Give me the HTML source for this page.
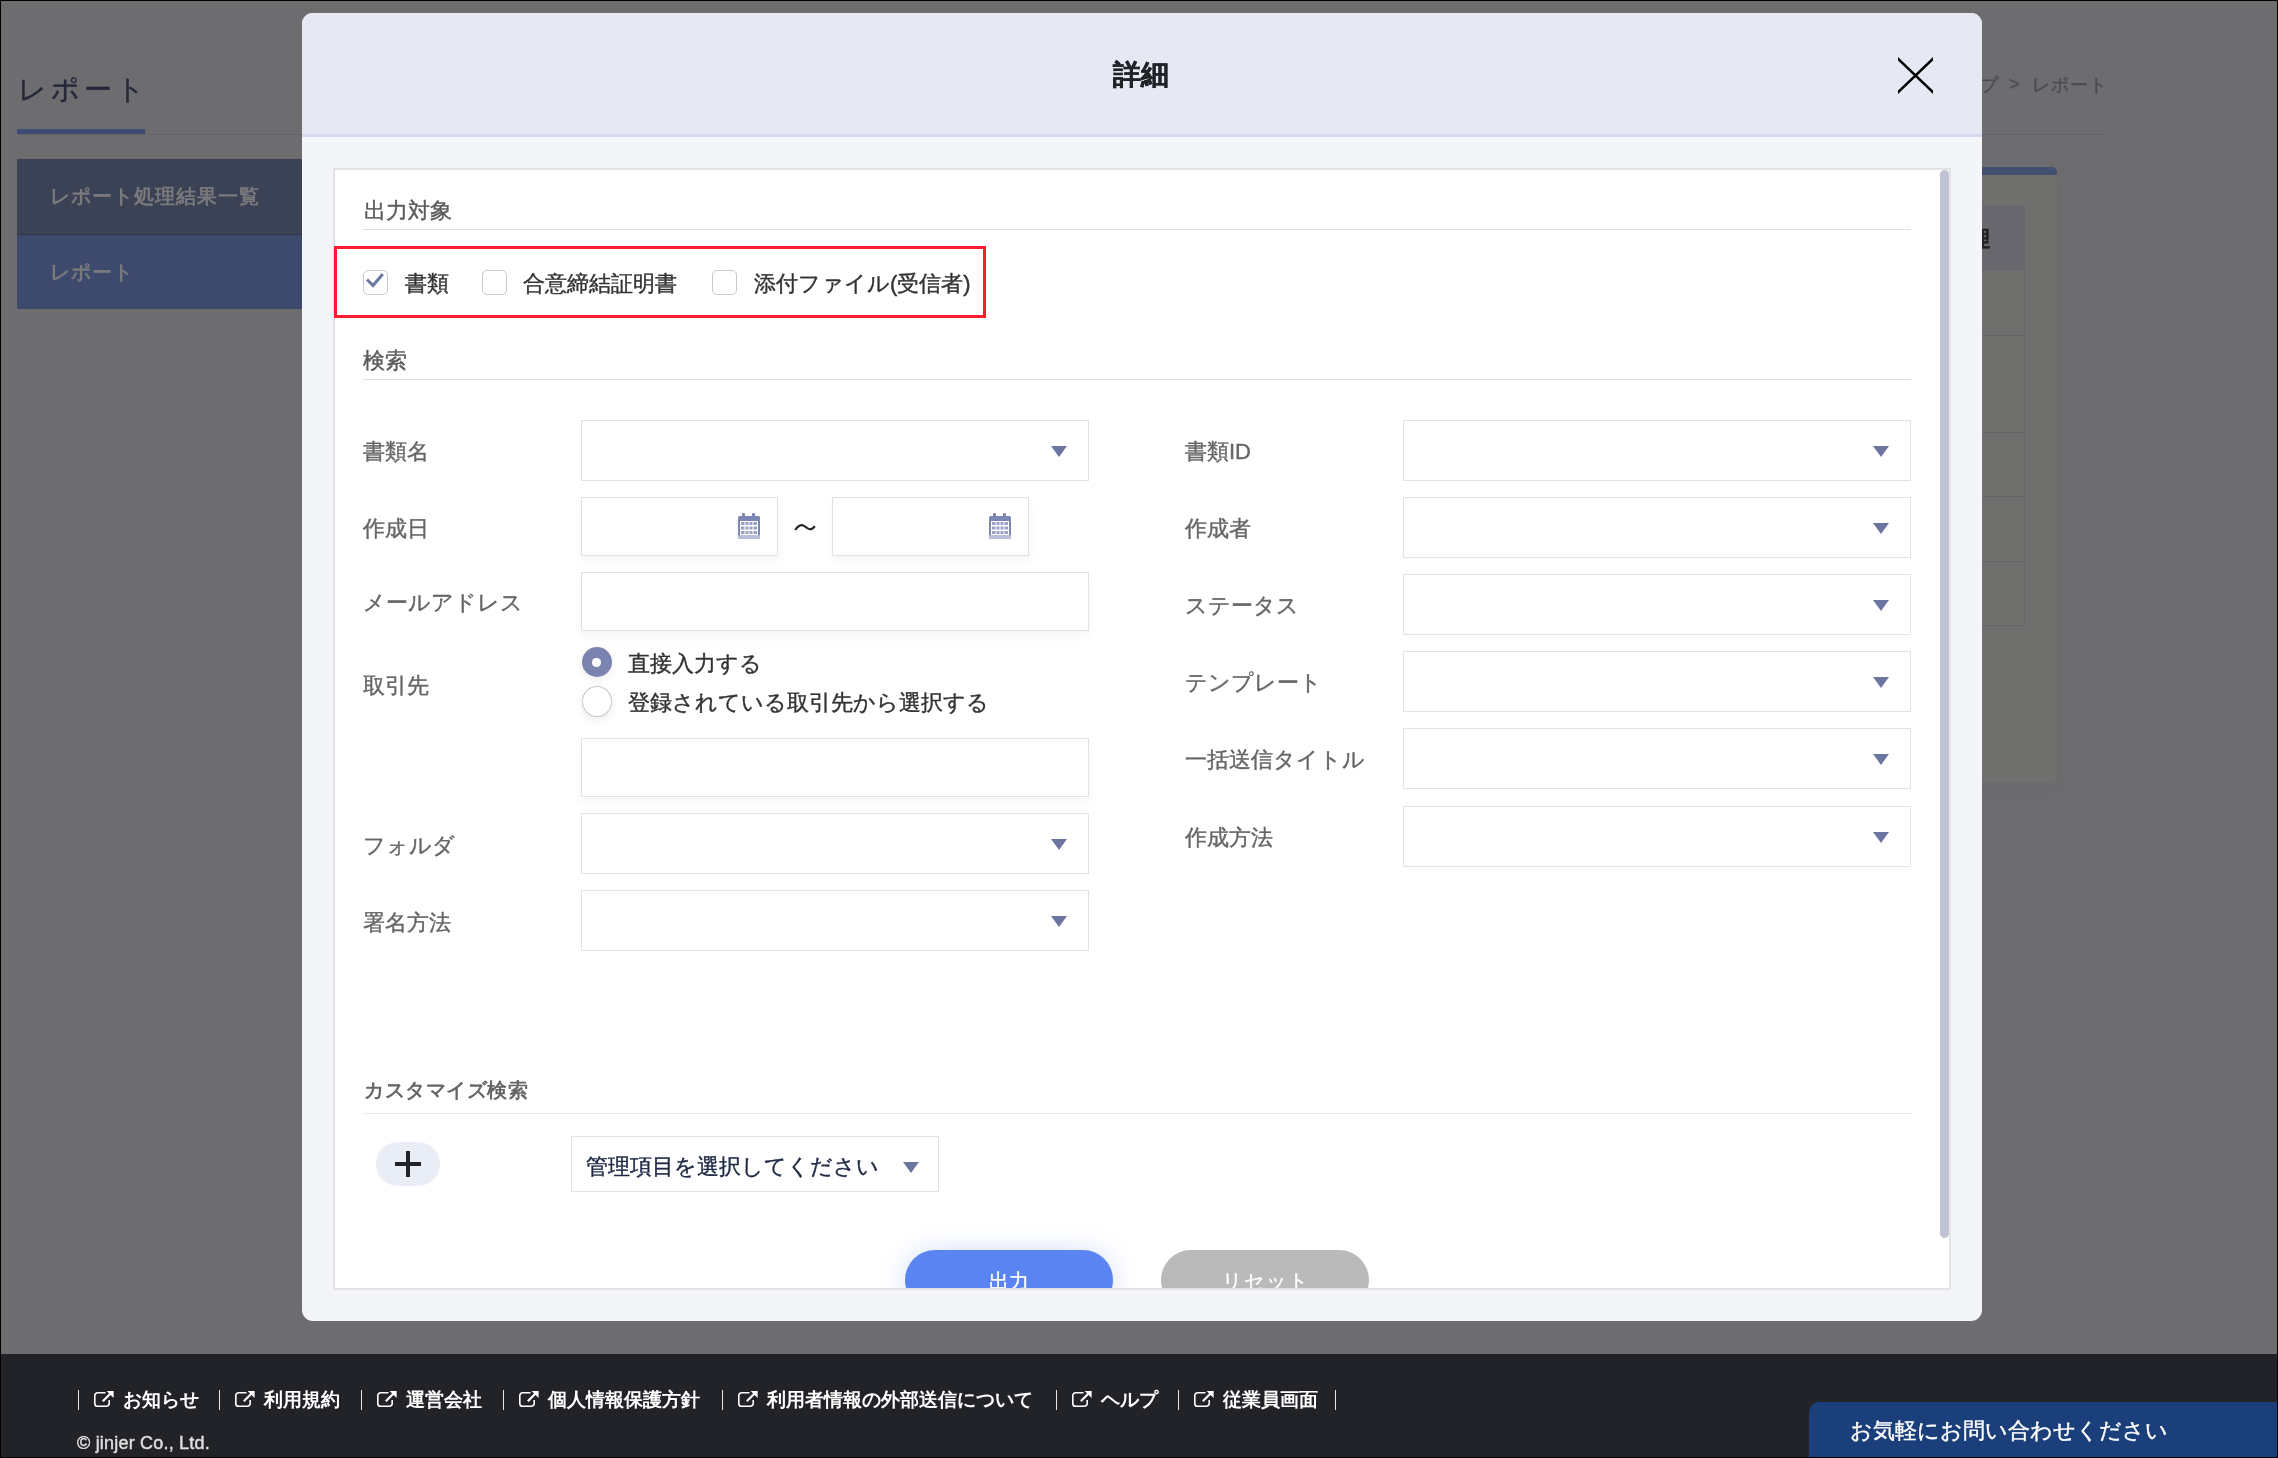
<!DOCTYPE html>
<html lang="ja">
<head>
<meta charset="utf-8">
<title>詳細</title>
<style>
*{box-sizing:border-box;margin:0;padding:0}
html,body{width:2278px;height:1458px;overflow:hidden;background:#000}
body{font-family:"Liberation Sans",sans-serif;position:relative;-webkit-text-stroke-width:0.4px}
.a{position:absolute;white-space:nowrap}
#root{position:absolute;left:0;top:0;width:2278px;height:1458px;overflow:hidden;background:#6d6d6f;will-change:transform}
#frame{position:absolute;left:0;top:0;width:2278px;height:1458px;border:1px solid #000;z-index:50}
/* background page */
.t22{font-size:22px;line-height:22px}
.t20{font-size:20px;line-height:20px}
/* modal */
#modal{position:absolute;left:302px;top:13px;width:1680px;height:1308px;border-radius:11px;background:#f4f5f9;overflow:hidden}
#mhead{position:absolute;left:0;top:0;width:1680px;height:124px;background:#e6e8f4;border-bottom:3px solid #d6d8ee}
#panel{position:absolute;left:31px;top:155px;width:1618px;height:1122px;border:2px solid #e3e3e6;background:#fff;overflow:hidden}
.lbl{color:#666;font-size:22px;line-height:22px}
.box{position:absolute;border:1px solid #e2e2e2;background:#fff}
.sh{box-shadow:0 5px 10px rgba(0,0,0,0.045)}
.tri{position:absolute;width:0;height:0;border-left:8px solid transparent;border-right:8px solid transparent;border-top:11px solid #6c75a0}
.cb{position:absolute;width:25px;height:25px;border:1px solid #c9c9c9;border-radius:5px;background:#fff}
.hline{position:absolute;height:1px;background:#e0e0e0}
.flink{position:absolute;top:1390px;color:#fff;font-size:19px;line-height:19px;font-weight:bold;-webkit-text-stroke-width:0}
.fsep{position:absolute;top:1390px;width:1px;height:20px;background:#e6e6e6}
</style>
</head>
<body>
<div id="root">
  <!-- background page (already dimmed colours) -->
  <div class="a" style="left:18px;top:76px;font-size:28px;line-height:28px;letter-spacing:4px;color:#25283a">レポート</div>
  <div class="a" style="left:17px;top:129px;width:128px;height:5px;background:#3d4b75"></div>
  <div class="a" style="left:17px;top:134px;width:2089px;height:1px;background:#646466"></div>
  <div class="a" style="left:17px;top:159px;width:300px;height:75px;background:#3c4256"></div>
  <div class="a" style="left:17px;top:234px;width:300px;height:1px;background:#30354a"></div>
  <div class="a" style="left:17px;top:235px;width:300px;height:74px;background:#3d4a6e"></div>
  <div class="a" style="left:50px;top:186px;font-size:20px;line-height:21px;font-weight:bold;color:#7a7a7c;letter-spacing:1px;-webkit-text-stroke-width:0">レポート処理結果一覧</div>
  <div class="a" style="left:50px;top:262px;font-size:20px;line-height:21px;font-weight:bold;color:#7a7a7c;letter-spacing:1px;-webkit-text-stroke-width:0">レポート</div>
  <div class="a" style="left:1942px;top:76px;font-size:18px;line-height:18px;color:#4a4c55;letter-spacing:1px">トップ</div><div class="a" style="left:2009px;top:75px;font-size:18px;line-height:18px;color:#4a4c55">&gt;</div><div class="a" style="left:2032px;top:76px;font-size:18px;line-height:18px;color:#4a4c55;letter-spacing:1px">レポート</div>
  <div class="a" style="left:1900px;top:167px;width:157px;height:8px;background:#434f70;border-radius:0 5px 0 0"></div>
  <div class="a" style="left:1900px;top:175px;width:157px;height:608px;background:#6f706e;box-shadow:0 4px 16px rgba(0,0,0,0.04)"></div>
  <div class="a" style="left:1900px;top:206px;width:125px;height:65px;background:#67676d"></div>
  <div class="a" style="left:1948px;top:228px;font-size:21px;line-height:21px;font-weight:bold;color:#222">処理</div>
  <div class="a" style="left:1900px;top:271px;width:125px;height:355px;border-right:1px solid #666667"></div>
  <div class="a" style="left:1900px;top:335px;width:125px;height:1px;background:#666667"></div>
  <div class="a" style="left:1900px;top:432px;width:125px;height:1px;background:#666667"></div>
  <div class="a" style="left:1900px;top:496px;width:125px;height:1px;background:#666667"></div>
  <div class="a" style="left:1900px;top:561px;width:125px;height:1px;background:#666667"></div>
  <div class="a" style="left:1900px;top:625px;width:125px;height:1px;background:#666667"></div>

  <!-- footer -->
  <div class="a" style="left:0;top:1354px;width:2278px;height:104px;background:#222328"></div>
  <div class="fsep" style="left:78px"></div><div class="fsep" style="left:219px"></div><div class="fsep" style="left:361px"></div><div class="fsep" style="left:503px"></div><div class="fsep" style="left:722px"></div><div class="fsep" style="left:1056px"></div><div class="fsep" style="left:1178px"></div><div class="fsep" style="left:1335px"></div><svg class="a" style="left:94px;top:1390px" width="20" height="18" viewBox="0 0 20 18"><path d="M11.5 2.8H3.6A2.8 2.8 0 0 0 0.8 5.6V13.4A2.8 2.8 0 0 0 3.6 16.2H12.4A2.8 2.8 0 0 0 15.2 13.4V10" fill="none" stroke="#fff" stroke-width="1.6"/><path d="M8.8 11.2L16.5 3.5" stroke="#fff" stroke-width="2.2"/><path d="M12.6 1H19.6V8Z" fill="#fff"/></svg><div class="flink a" style="left:123px">お知らせ</div><svg class="a" style="left:235px;top:1390px" width="20" height="18" viewBox="0 0 20 18"><path d="M11.5 2.8H3.6A2.8 2.8 0 0 0 0.8 5.6V13.4A2.8 2.8 0 0 0 3.6 16.2H12.4A2.8 2.8 0 0 0 15.2 13.4V10" fill="none" stroke="#fff" stroke-width="1.6"/><path d="M8.8 11.2L16.5 3.5" stroke="#fff" stroke-width="2.2"/><path d="M12.6 1H19.6V8Z" fill="#fff"/></svg><div class="flink a" style="left:264px">利用規約</div><svg class="a" style="left:377px;top:1390px" width="20" height="18" viewBox="0 0 20 18"><path d="M11.5 2.8H3.6A2.8 2.8 0 0 0 0.8 5.6V13.4A2.8 2.8 0 0 0 3.6 16.2H12.4A2.8 2.8 0 0 0 15.2 13.4V10" fill="none" stroke="#fff" stroke-width="1.6"/><path d="M8.8 11.2L16.5 3.5" stroke="#fff" stroke-width="2.2"/><path d="M12.6 1H19.6V8Z" fill="#fff"/></svg><div class="flink a" style="left:406px">運営会社</div><svg class="a" style="left:519px;top:1390px" width="20" height="18" viewBox="0 0 20 18"><path d="M11.5 2.8H3.6A2.8 2.8 0 0 0 0.8 5.6V13.4A2.8 2.8 0 0 0 3.6 16.2H12.4A2.8 2.8 0 0 0 15.2 13.4V10" fill="none" stroke="#fff" stroke-width="1.6"/><path d="M8.8 11.2L16.5 3.5" stroke="#fff" stroke-width="2.2"/><path d="M12.6 1H19.6V8Z" fill="#fff"/></svg><div class="flink a" style="left:548px">個人情報保護方針</div><svg class="a" style="left:738px;top:1390px" width="20" height="18" viewBox="0 0 20 18"><path d="M11.5 2.8H3.6A2.8 2.8 0 0 0 0.8 5.6V13.4A2.8 2.8 0 0 0 3.6 16.2H12.4A2.8 2.8 0 0 0 15.2 13.4V10" fill="none" stroke="#fff" stroke-width="1.6"/><path d="M8.8 11.2L16.5 3.5" stroke="#fff" stroke-width="2.2"/><path d="M12.6 1H19.6V8Z" fill="#fff"/></svg><div class="flink a" style="left:767px">利用者情報の外部送信について</div><svg class="a" style="left:1072px;top:1390px" width="20" height="18" viewBox="0 0 20 18"><path d="M11.5 2.8H3.6A2.8 2.8 0 0 0 0.8 5.6V13.4A2.8 2.8 0 0 0 3.6 16.2H12.4A2.8 2.8 0 0 0 15.2 13.4V10" fill="none" stroke="#fff" stroke-width="1.6"/><path d="M8.8 11.2L16.5 3.5" stroke="#fff" stroke-width="2.2"/><path d="M12.6 1H19.6V8Z" fill="#fff"/></svg><div class="flink a" style="left:1101px">ヘルプ</div><svg class="a" style="left:1194px;top:1390px" width="20" height="18" viewBox="0 0 20 18"><path d="M11.5 2.8H3.6A2.8 2.8 0 0 0 0.8 5.6V13.4A2.8 2.8 0 0 0 3.6 16.2H12.4A2.8 2.8 0 0 0 15.2 13.4V10" fill="none" stroke="#fff" stroke-width="1.6"/><path d="M8.8 11.2L16.5 3.5" stroke="#fff" stroke-width="2.2"/><path d="M12.6 1H19.6V8Z" fill="#fff"/></svg><div class="flink a" style="left:1223px">従業員画面</div>
  <div class="a" style="left:77px;top:1434px;font-size:18px;line-height:18px;color:#e0e0e0;letter-spacing:0.2px">© jinjer Co., Ltd.</div>
  <div class="a" style="left:1809px;top:1402px;width:470px;height:60px;background:#1a3f7a;border-radius:10px 0 0 0"></div>
  <div class="a t22" style="left:1850px;top:1420px;color:#fff">お気軽にお問い合わせください</div>

  <!-- modal -->
  <div id="modal">
    <div id="mhead"></div>
    <div class="a" style="left:811px;top:48px;font-size:28px;line-height:28px;font-weight:bold;color:#222327">詳細</div>
    <svg class="a" style="left:1596px;top:44px" width="35" height="37" viewBox="0 0 35 37"><path d="M0 0L35 33.4V37L0 3.6Z M35 0V3.6L0 37V33.4Z" fill="#000"/></svg>
    <div id="panel">
<div class="a" style="left:29px;top:30px;font-size:22px;line-height:22px;color:#5a5a5a">出力対象</div>
<div class="hline" style="left:28px;top:59px;width:1548px"></div>
<div class="cb" style="left:28px;top:100px"><svg class="a" style="left:0;top:0" width="24" height="20" viewBox="0 0 24 20"><path d="M3 8.5L9 14.5L18.8 3" fill="none" stroke="#6c77a0" stroke-width="3"/></svg></div>
<div class="cb" style="left:147px;top:100px"></div>
<div class="cb" style="left:377px;top:100px"></div>
<div class="a" style="left:70px;top:103px;font-size:22px;line-height:22px;color:#333">書類</div>
<div class="a" style="left:188px;top:103px;font-size:22px;line-height:22px;color:#333">合意締結証明書</div>
<div class="a" style="left:419px;top:103px;font-size:22px;line-height:22px;color:#333">添付ファイル(受信者)</div>
<div class="a" style="left:28px;top:180px;font-size:22px;line-height:22px;color:#5a5a5a">検索</div>
<div class="hline" style="left:28px;top:209px;width:1548px"></div>
<div class="a" style="left:28px;top:271px;font-size:22px;line-height:22px;color:#666">書類名</div>
<div class="a" style="left:28px;top:348px;font-size:22px;line-height:22px;color:#666">作成日</div>
<div class="a" style="left:28px;top:422px;font-size:22px;line-height:22px;color:#666">メールアドレス</div>
<div class="a" style="left:28px;top:505px;font-size:22px;line-height:22px;color:#666">取引先</div>
<div class="a" style="left:28px;top:665px;font-size:22px;line-height:22px;color:#666">フォルダ</div>
<div class="a" style="left:28px;top:742px;font-size:22px;line-height:22px;color:#666">署名方法</div>
<div class="a" style="left:850px;top:271px;font-size:22px;line-height:22px;color:#666">書類ID</div>
<div class="a" style="left:850px;top:348px;font-size:22px;line-height:22px;color:#666">作成者</div>
<div class="a" style="left:850px;top:425px;font-size:22px;line-height:22px;color:#666">ステータス</div>
<div class="a" style="left:850px;top:502px;font-size:22px;line-height:22px;color:#666">テンプレート</div>
<div class="a" style="left:850px;top:579px;font-size:22px;line-height:22px;color:#666">一括送信タイトル</div>
<div class="a" style="left:850px;top:657px;font-size:22px;line-height:22px;color:#666">作成方法</div>
<div class="box" style="left:246px;top:250px;width:508px;height:61px"><div class="tri" style="left:469px;top:25px"></div></div>
<div class="box sh" style="left:246px;top:327px;width:197px;height:59px"><svg class="a" style="left:156px;top:15px" width="22" height="26" viewBox="0 0 22 26"><rect x="0" y="3" width="22" height="23" rx="1.5" fill="#7c86b4"/><rect x="4" y="0" width="3" height="6" rx="1" fill="#7c86b4"/><rect x="14" y="0" width="3" height="6" rx="1" fill="#7c86b4"/><rect x="2" y="8" width="18" height="14" fill="#fff"/><g fill="#98a0c8"><rect x="3" y="9" width="3.5" height="3"/><rect x="7.5" y="9" width="3" height="3"/><rect x="11.5" y="9" width="3" height="3"/><rect x="15.5" y="9" width="3.5" height="3"/><rect x="3" y="13.5" width="3.5" height="3"/><rect x="7.5" y="13.5" width="3" height="3"/><rect x="11.5" y="13.5" width="3" height="3"/><rect x="15.5" y="13.5" width="3.5" height="3"/><rect x="3" y="18" width="3.5" height="3"/><rect x="7.5" y="18" width="3" height="3"/><rect x="11.5" y="18" width="3" height="3"/><rect x="15.5" y="18" width="3.5" height="3"/></g><rect x="0" y="22" width="22" height="4" rx="1" fill="#b9bfd9"/></svg></div>
<div class="box sh" style="left:497px;top:327px;width:197px;height:59px"><svg class="a" style="left:156px;top:15px" width="22" height="26" viewBox="0 0 22 26"><rect x="0" y="3" width="22" height="23" rx="1.5" fill="#7c86b4"/><rect x="4" y="0" width="3" height="6" rx="1" fill="#7c86b4"/><rect x="14" y="0" width="3" height="6" rx="1" fill="#7c86b4"/><rect x="2" y="8" width="18" height="14" fill="#fff"/><g fill="#98a0c8"><rect x="3" y="9" width="3.5" height="3"/><rect x="7.5" y="9" width="3" height="3"/><rect x="11.5" y="9" width="3" height="3"/><rect x="15.5" y="9" width="3.5" height="3"/><rect x="3" y="13.5" width="3.5" height="3"/><rect x="7.5" y="13.5" width="3" height="3"/><rect x="11.5" y="13.5" width="3" height="3"/><rect x="15.5" y="13.5" width="3.5" height="3"/><rect x="3" y="18" width="3.5" height="3"/><rect x="7.5" y="18" width="3" height="3"/><rect x="11.5" y="18" width="3" height="3"/><rect x="15.5" y="18" width="3.5" height="3"/></g><rect x="0" y="22" width="22" height="4" rx="1" fill="#b9bfd9"/></svg></div>
<svg class="a" style="left:459px;top:352px" width="22" height="10" viewBox="0 0 22 10"><path d="M1.2 8C4 3.5 7.5 1.5 11 4.5S17.5 9 20.8 4.2" fill="none" stroke="#222" stroke-width="2.2"/></svg>
<div class="box sh" style="left:246px;top:402px;width:508px;height:59px"></div>
<div class="a" style="left:246.5px;top:477px;width:30px;height:30px;border-radius:50%;background:#7b84ae;box-shadow:0 3px 8px rgba(0,0,0,0.08)"><div class="a" style="left:10.5px;top:11px;width:8.5px;height:8.5px;border-radius:50%;background:#fff"></div></div>
<div class="a" style="left:246.5px;top:516px;width:30px;height:31px;border-radius:50%;background:#fff;border:1px solid #c8c8c8;box-shadow:0 3px 8px rgba(0,0,0,0.08)"></div>
<div class="a" style="left:293px;top:483px;font-size:22px;line-height:22px;color:#333">直接入力する</div>
<div class="a" style="left:293px;top:522px;font-size:22px;line-height:22px;color:#333">登録されている取引先から選択する</div>
<div class="box sh" style="left:246px;top:568px;width:508px;height:59px"></div>
<div class="box" style="left:246px;top:643px;width:508px;height:61px"><div class="tri" style="left:469px;top:25px"></div></div>
<div class="box" style="left:246px;top:720px;width:508px;height:61px"><div class="tri" style="left:469px;top:25px"></div></div>
<div class="box" style="left:1068px;top:250px;width:508px;height:61px"><div class="tri" style="left:469px;top:25px"></div></div>
<div class="box" style="left:1068px;top:327px;width:508px;height:61px"><div class="tri" style="left:469px;top:25px"></div></div>
<div class="box" style="left:1068px;top:404px;width:508px;height:61px"><div class="tri" style="left:469px;top:25px"></div></div>
<div class="box" style="left:1068px;top:481px;width:508px;height:61px"><div class="tri" style="left:469px;top:25px"></div></div>
<div class="box" style="left:1068px;top:558px;width:508px;height:61px"><div class="tri" style="left:469px;top:25px"></div></div>
<div class="box" style="left:1068px;top:636px;width:508px;height:61px"><div class="tri" style="left:469px;top:25px"></div></div>
<div class="a" style="left:29px;top:910px;font-size:20px;line-height:20px;color:#666;font-weight:bold;letter-spacing:0.5px;-webkit-text-stroke-width:0">カスタマイズ検索</div>
<div class="hline" style="left:28px;top:943px;width:1548px;background:#e6e9ef"></div>
<div class="a" style="left:41px;top:972px;width:64px;height:44px;border-radius:22px;background:#e9edf5"><div class="a" style="left:19px;top:20px;width:26px;height:4px;background:#22242a"></div><div class="a" style="left:30px;top:9px;width:4px;height:26px;background:#22242a"></div></div>
<div class="box" style="left:236px;top:966px;width:368px;height:56px"><div class="a" style="left:14px;top:19px;font-size:22px;line-height:22px;color:#1f2a44">管理項目を選択してください</div><div class="tri" style="left:331px;top:25px"></div></div>
<div class="a" style="left:570px;top:1080px;width:208px;height:60px;border-radius:30px;background:#5b84f3;box-shadow:0 0 24px rgba(91,132,243,0.25)"><div class="a" style="left:0;top:21px;width:208px;text-align:center;font-size:20px;line-height:20px;color:#fff">出力</div></div>
<div class="a" style="left:826px;top:1080px;width:208px;height:60px;border-radius:30px;background:#bababa"><div class="a" style="left:0;top:21px;width:208px;text-align:center;font-size:20px;line-height:20px;color:#fff;letter-spacing:2px;text-indent:2px">リセット</div></div>
<div class="a" style="left:1605px;top:0;width:9px;height:1068px;border-radius:5px;background:#c0c3d4"></div>
</div>
  </div>
</div>
<div class="a" style="left:334px;top:246px;width:652px;height:72px;border:3px solid #fe1a30;z-index:40"></div>
<div id="frame"></div>
</body>
</html>
